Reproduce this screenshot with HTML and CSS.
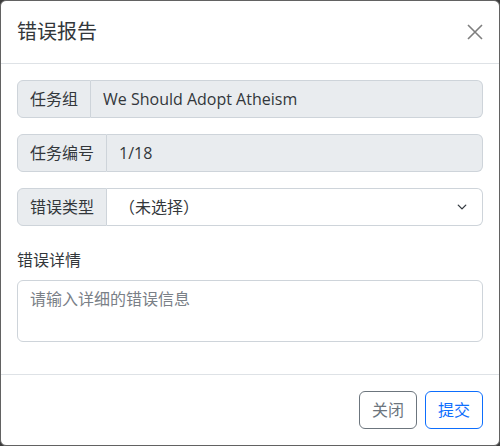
FILE: index.html
```html
<!DOCTYPE html>
<html lang="zh-CN">
<head>
<meta charset="utf-8">
<title>错误报告</title>
<link rel="stylesheet" href="styles.css">
</head>
<body>
<div class="modal">
  <div class="modal-header">
    <h5 class="modal-title">错误报告</h5>
    <button class="btn-close" type="button" aria-label="Close">
      <svg viewBox="0 0 16 16" width="16" height="16"><path d="M1 1L15 15M15 1L1 15" fill="none" stroke="#000" stroke-width="1.6"/></svg>
    </button>
  </div>
  <div class="modal-body">
    <div class="input-group">
      <span class="addon">任务组</span>
      <div class="field readonly">We Should Adopt Atheism</div>
    </div>
    <div class="input-group">
      <span class="addon">任务编号</span>
      <div class="field readonly">1/18</div>
    </div>
    <div class="input-group last">
      <span class="addon">错误类型</span>
      <div class="field select">
        <span>（未选择）</span>
        <svg class="chev" viewBox="0 0 16 16" width="16" height="12"><path d="M3 5.5l5 5 5-5" fill="none" stroke="#343a40" stroke-width="1.8" stroke-linecap="round" stroke-linejoin="round"/></svg>
      </div>
    </div>
    <label class="form-label">错误详情</label>
    <div class="textarea">请输入详细的错误信息</div>
  </div>
  <div class="modal-footer">
    <button class="btn btn-secondary" type="button">关闭</button>
    <button class="btn btn-primary" type="button">提交</button>
  </div>
</div>
</body>
</html>
```
FILE: styles.css
```css
* { box-sizing: border-box; }
html, body {
  margin: 0;
  padding: 0;
  background: #3c3c3c;
}
body {
  font-family: "Open Sans", "Noto Sans CJK SC", sans-serif;
  font-size: 16px;
  line-height: 1.5;
  color: #212529;
  width: 500px;
  height: 446px;
}
.modal {
  width: 500px;
  height: 446px;
  background: #fff;
  border: 1px solid #626262;
  border-radius: 6px;
  display: flex;
  flex-direction: column;
}
.modal-header {
  display: flex;
  align-items: center;
  justify-content: space-between;
  padding: 16px;
  border-bottom: 1px solid #dee2e6;
}
.modal-title {
  margin: 0;
  font-size: 20px;
  font-weight: 400;
  line-height: 30px;
  color: #33373b;
}
.btn-close {
  border: 0;
  background: none;
  padding: 0;
  width: 16px;
  height: 16px;
  margin-right: 0;
  opacity: 0.5;
  display: block;
}
.btn-close svg { display: block; }
.modal-body {
  padding: 16px;
}
.input-group {
  display: flex;
  height: 38px;
  margin-bottom: 16px;
}
.input-group.last { margin-bottom: 22px; }
.addon {
  display: flex;
  align-items: center;
  padding: 6px 12px;
  background: #e9ecef;
  border: 1px solid #ced4da;
  border-radius: 6px 0 0 6px;
  white-space: nowrap;
  color: #33373b;
}
.field {
  flex: 1;
  display: flex;
  align-items: center;
  padding: 6px 12px;
  border: 1px solid #ced4da;
  border-left: 0;
  border-radius: 0 6px 6px 0;
  color: #33373b;
}
.readonly { background: #e9ecef; }
.select {
  background: #fff;
  justify-content: space-between;
}
.chev { display: block; margin-right: 0; }
.form-label {
  display: block;
  margin-bottom: 8px;
  line-height: 24px;
  color: #33373b;
}
.textarea {
  height: 62px;
  padding: 6px 12px;
  border: 1px solid #ced4da;
  border-radius: 6px;
  color: #7a8087;
  margin-bottom: 16px;
}
.modal-footer {
  display: flex;
  justify-content: flex-end;
  padding: 12px;
  border-top: 1px solid #dee2e6;
  margin-top: auto;
}
.btn {
  font-family: inherit;
  font-size: 16px;
  line-height: 24px;
  padding: 6px 12px;
  margin: 4px;
  background: #fff;
  border: 1px solid;
  border-radius: 6px;
}
.btn-secondary { color: #6c757d; border-color: #6c757d; }
.btn-primary { color: #0d6efd; border-color: #0d6efd; }
```
